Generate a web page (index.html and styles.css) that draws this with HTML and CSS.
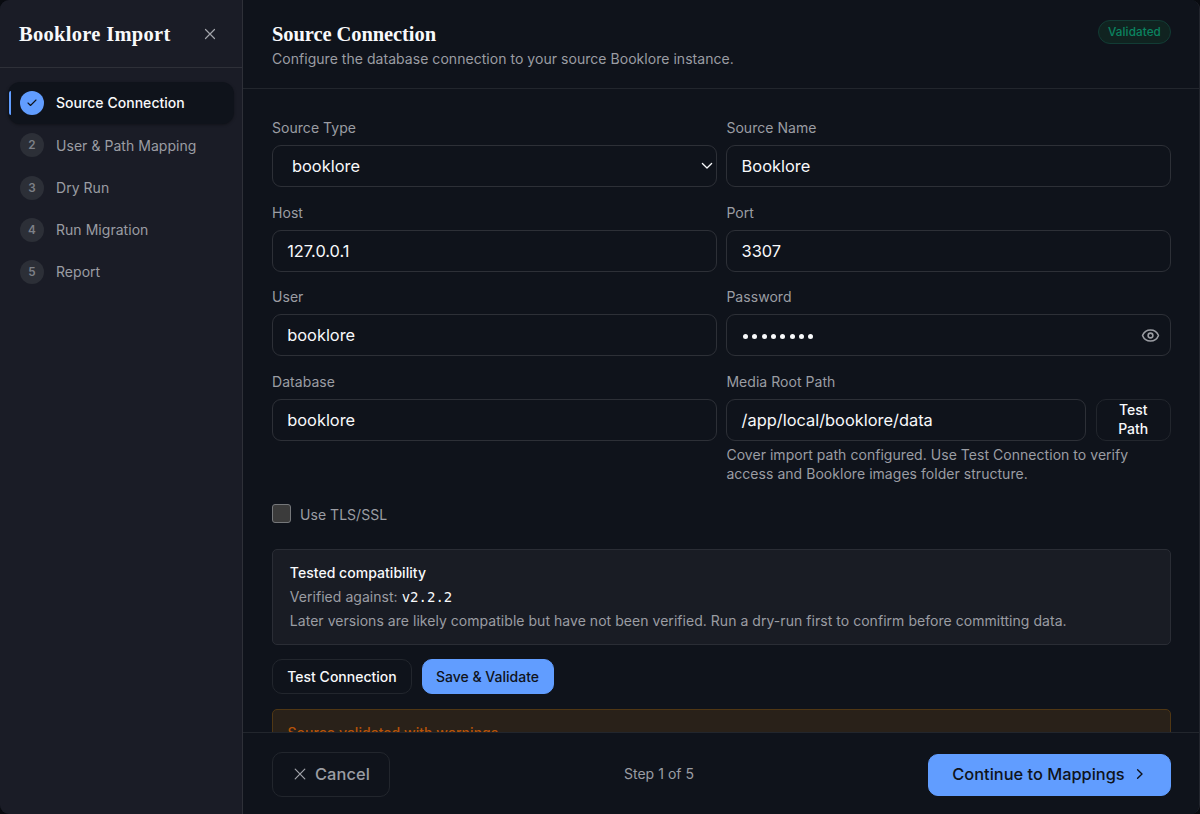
FILE: index.html
```html
<!DOCTYPE html>
<html lang="en">
<head>
<meta charset="utf-8">
<title>Booklore Import</title>
<link rel="stylesheet" href="styles.css">
</head>
<body>
<div class="dialog">
  <aside class="sidebar">
    <div class="sidebar-head">
      <h1 class="title title-side">Booklore Import</h1>
      <svg class="close" viewBox="0 0 12 12"><path d="M1.500 1.500l9 9M10.500 1.500l-9 9"/></svg>
    </div>
    <nav class="steps">
      <div class="step active"><span class="num done"><svg class="check" viewBox="0 0 24 24"><path d="M20 6 9 17l-5-5"/></svg></span><span class="step-label">Source Connection</span></div>
      <div class="step"><span class="num">2</span><span class="step-label">User &amp; Path Mapping</span></div>
      <div class="step"><span class="num">3</span><span class="step-label">Dry Run</span></div>
      <div class="step"><span class="num">4</span><span class="step-label">Run Migration</span></div>
      <div class="step"><span class="num">5</span><span class="step-label">Report</span></div>
    </nav>
  </aside>
  <main class="main">
    <header class="head">
      <div>
        <h2 class="title title-main">Source Connection</h2>
        <p class="sub">Configure the database connection to your source Booklore instance.</p>
      </div>
      <span class="badge">Validated</span>
    </header>
    <section class="content">
      <div class="grid">
        <div class="field"><span class="label">Source Type</span><div class="input select"><span>booklore</span><svg class="chev" viewBox="0 0 12 8"><path d="M1.400 1.500 6 6l4.600-4.500"/></svg></div></div>
        <div class="field"><span class="label">Source Name</span><div class="input">Booklore</div></div>
        <div class="field"><span class="label">Host</span><div class="input">127.0.0.1</div></div>
        <div class="field"><span class="label">Port</span><div class="input">3307</div></div>
        <div class="field"><span class="label">User</span><div class="input">booklore</div></div>
        <div class="field"><span class="label">Password</span><div class="input secret"><span class="dots"><i></i><i></i><i></i><i></i><i></i><i></i><i></i><i></i></span><svg class="eye" viewBox="0 0 24 24"><path d="M2.062 12.348a1 1 0 0 1 0-.696 10.750 10.750 0 0 1 19.876 0 1 1 0 0 1 0 .696 10.750 10.750 0 0 1-19.876 0"/><circle cx="12" cy="12" r="3"/></svg></div></div>
        <div class="field"><span class="label">Database</span><div class="input">booklore</div></div>
        <div class="field"><span class="label">Media Root Path</span>
          <div class="row"><div class="input grow">/app/local/booklore/data</div><button class="btn test-path">Test<br>Path</button></div>
          <p class="hint">Cover import path configured. Use Test Connection to verify<br>access and Booklore images folder structure.</p>
        </div>
      </div>
      <div class="tls"><span class="box"></span><span class="tls-label">Use TLS/SSL</span></div>
      <div class="compat">
        <p class="compat-title">Tested compatibility</p>
        <p>Verified against: <code>v2.2.2</code></p>
        <p>Later versions are likely compatible but have not been verified. Run a dry-run first to confirm before committing data.</p>
      </div>
      <div class="actions"><button class="btn test-conn">Test Connection</button><button class="btn primary save">Save &amp; Validate</button></div>
      <div class="warning">Source validated with warnings</div>
    </section>
    <footer class="foot">
      <button class="btn cancel"><svg class="close" viewBox="0 0 12 12"><path d="M1.200 1.200l9.600 9.600M10.800 1.200l-9.600 9.600"/></svg><span>Cancel</span></button>
      <span class="progress">Step 1 of 5</span>
      <button class="btn primary next"><span>Continue to Mappings</span><svg class="arrow" viewBox="0 0 8 12"><path d="M1.600 1.800 6 6l-4.400 4.200"/></svg></button>
    </footer>
  </main>
</div>
</body>
</html>
```
FILE: styles.css
```css
* { box-sizing: border-box; }
body { margin: 0; background: #090b10; font-family: Inter, sans-serif; font-size: 14px; letter-spacing: .04px; color: #9b9da3; }
h1, h2, p { margin: 0; }
svg { fill: none; stroke: currentColor; stroke-linecap: round; stroke-linejoin: round; flex: none; }
.dialog { display: flex; width: 1200px; height: 814px; overflow: hidden; border-radius: 9px; background: #0f131b; border-right: 1px solid #22252d; }
.sidebar { width: 243px; flex: none; background: #1a1c26; border-right: 1px solid #2e3038; }
.sidebar-head { height: 68px; display: flex; align-items: center; justify-content: space-between; padding: 0 27px 0 19px; border-bottom: 1px solid #2e3038; }
.title { font-family: "Liberation Serif", serif; font-weight: 700; color: #f8f9fb; line-height: 24px; white-space: nowrap; }
.title-side { font-size: 20.500px; letter-spacing: .3px; }
.title-main { font-size: 20.500px; letter-spacing: -.08px; }
.close { width: 12px; height: 12px; stroke-width: 1.200; color: #a2a4aa; }
.sidebar-head .close { margin-right: -1px; }
.steps { padding: 14px 8px; display: flex; flex-direction: column; }
.step { position: relative; height: 42.250px; display: flex; align-items: center; gap: 12px; padding-left: 12px; }
.step-label { padding-bottom: .4px; }
.step.active { color: #f8f9fb; font-weight: 500; background: #0f131b; border-radius: 12px; box-shadow: 0 1px 3px rgba(0,0,0,.35); }
.step.active .step-label { padding-bottom: 1px; }
.step.active::before { content: ""; position: absolute; left: 1px; top: 9px; width: 2px; height: 24px; background: #619dff; border-radius: 2px 0 0 2px; }
.num { width: 24px; height: 24px; border-radius: 50%; background: #2c2f37; color: #7d8087; display: grid; place-items: center; font-size: 11.700px; font-weight: 600; letter-spacing: 0; }
.num.done { background: #619dff; color: #0f131b; }
.check { width: 12px; height: 12px; stroke-width: 2.200; }
.main { flex: 1; min-width: 0; display: flex; flex-direction: column; background: #0f131b; }
.head { height: 89px; flex: none; display: flex; justify-content: space-between; align-items: flex-start; padding: 22px 28px 0 29px; border-bottom: 1px solid #22262d; }
.sub { line-height: 20px; margin-top: 3px; }
.badge { margin-top: -2px; width: 73px; height: 24px; display: flex; align-items: center; justify-content: center; border: 1px solid #123c35; border-radius: 12px; background: #102320; color: #0b8460; font-size: 11.700px; font-weight: 500; letter-spacing: .1px; }
.content { flex: 1; min-height: 0; overflow: hidden; padding: 28px 28px 0 29px; }
.grid { display: grid; grid-template-columns: 1fr 1fr; column-gap: 9.800px; row-gap: 14.500px; }
.label { display: block; line-height: 20px; padding-top: 1px; margin-bottom: 7px; }
.input { height: 42px; display: flex; align-items: center; padding: 0 14.200px; border: 1px solid #2d3037; border-radius: 9px; color: #f8f9fb; font-size: 16.400px; letter-spacing: 0; }
.select { padding: 0 3px 0 19px; justify-content: space-between; }
.chev { width: 12px; height: 8px; stroke-width: 1.300; }
.secret { justify-content: space-between; padding-right: 10.500px; }
.dots { display: flex; gap: 4.300px; padding: 2px 0 0 1.500px; }
.dots i { width: 5px; height: 5px; border-radius: 50%; background: #f8f9fb; }
.eye { width: 19px; height: 19px; stroke-width: 2; color: #9b9da3; }
.row { display: flex; gap: 9.500px; }
.grow { flex: 1; }
.btn { font-family: inherit; font-size: 14px; font-weight: 500; color: #f8f9fb; background: transparent; border: 1px solid #22262d; border-radius: 10px; padding: 0; display: flex; align-items: center; justify-content: center; white-space: nowrap; letter-spacing: 0; }
.test-path { width: 75.500px; height: 42px; line-height: 19px; padding-bottom: 1px; }
.hint { line-height: 19px; margin-top: 4px; white-space: nowrap; }
.tls { display: flex; align-items: center; gap: 9px; margin-top: 21px; height: 19px; }
.tls-label { padding-top: 2px; }
.box { width: 19px; height: 19px; border: 1px solid #75777a; border-radius: 3px; background: #3b3b3b; }
.compat { margin-top: 26px; height: 96px; padding: 11.500px 16.800px; border: 1px solid #2a2d35; border-radius: 5px; background: #191c24; line-height: 23.500px; white-space: nowrap; }
.compat-title { color: #f8f9fb; font-weight: 500; }
.compat code { font-family: "DejaVu Sans Mono", monospace; font-size: 14px; letter-spacing: 0; color: #f8f9fb; }
.actions { display: flex; gap: 9.500px; margin-top: 14.500px; }
.actions .btn { padding-bottom: 1px; }
.test-conn { width: 140px; height: 35px; }
.primary { background: #619dff; color: #0f131b; border-color: #619dff; }
.save { width: 132px; height: 35px; }
.warning { margin-top: 14.500px; height: 80px; padding: 13px 14.500px; border: 1px solid #503714; border-radius: 5px; background: #292119; color: #b65309; font-weight: 500; line-height: 20px; }
.foot { height: 82px; flex: none; border-top: 1px solid #22262d; display: flex; align-items: center; justify-content: space-between; padding: 2px 28px 0 29px; }
.cancel { width: 118px; height: 45px; gap: 9px; padding: 0 0 1px 2px; font-size: 16.400px; letter-spacing: .1px; color: #9b9da3; }
.progress { padding-bottom: 2px; }
.next { width: 243px; height: 42px; gap: 11px; padding: 0 3px 1px 0; font-size: 16.400px; }
.arrow { width: 8px; height: 12px; stroke-width: 1.400; }
```
